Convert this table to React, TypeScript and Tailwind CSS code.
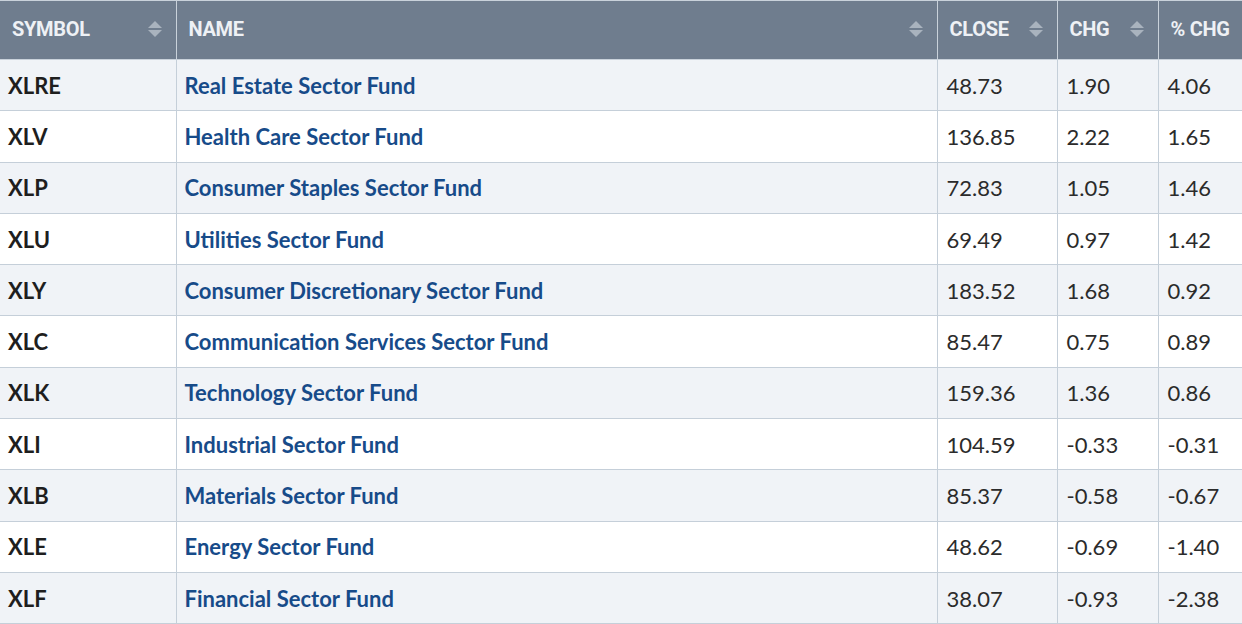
import React from "react";

const rows: [string, string, string, string, string][] = [
  ["XLRE", "Real Estate Sector Fund", "48.73", "1.90", "4.06"],
  ["XLV", "Health Care Sector Fund", "136.85", "2.22", "1.65"],
  ["XLP", "Consumer Staples Sector Fund", "72.83", "1.05", "1.46"],
  ["XLU", "Utilities Sector Fund", "69.49", "0.97", "1.42"],
  ["XLY", "Consumer Discretionary Sector Fund", "183.52", "1.68", "0.92"],
  ["XLC", "Communication Services Sector Fund", "85.47", "0.75", "0.89"],
  ["XLK", "Technology Sector Fund", "159.36", "1.36", "0.86"],
  ["XLI", "Industrial Sector Fund", "104.59", "-0.33", "-0.31"],
  ["XLB", "Materials Sector Fund", "85.37", "-0.58", "-0.67"],
  ["XLE", "Energy Sector Fund", "48.62", "-0.69", "-1.40"],
  ["XLF", "Financial Sector Fund", "38.07", "-0.93", "-2.38"],
];

function SortIcon() {
  return (
    <svg width="14" height="16" viewBox="0 0 14 16" className="shrink-0">
      <path d="M7 0 L14 7 H0 Z" fill="#a9b3be" />
      <path d="M0 9 H14 L7 16 Z" fill="#a9b3be" />
    </svg>
  );
}

function Th({ label, w, sort = true, last = false }: { label: string; w: string; sort?: boolean; last?: boolean }) {
  return (
    <th
      className={`${w} h-[59px] p-0 text-left align-middle font-bold ${last ? "" : "border-r border-r-[#c9d2db]"}`}
    >
      <div className="flex items-center justify-between whitespace-nowrap pl-[12px] pr-[14px] pb-[2px]">
        <span className="text-[20px] text-[#eef1f5] tracking-[-0.3px] font-['Roboto',sans-serif]">{label}</span>
        {sort && <SortIcon />}
      </div>
    </th>
  );
}

export default function App() {
  return (
    <div className="w-[1242px] h-[624px] overflow-hidden bg-white font-['Lato',sans-serif]">
      <table className="w-[1242px] border-collapse table-fixed">
        <thead>
          <tr className="bg-[#6f7d8e] border-t border-t-[#c9d2db] border-b border-b-[#c9d2db]">
            <Th label="SYMBOL" w="w-[176px]" />
            <Th label="NAME" w="w-[761px]" />
            <Th label="CLOSE" w="w-[120px]" />
            <Th label="CHG" w="w-[101px]" />
            <Th label="% CHG" w="w-[84px]" sort={false} last />
          </tr>
        </thead>
        <tbody>
          {rows.map((r, i) => (
            <tr
              key={r[0]}
              className={`h-[51.3px] border-b border-b-[#c5cfd9] ${i % 2 === 0 ? "bg-[#f0f3f7]" : "bg-white"}`}
            >
              <td className="px-[8px] py-0 border-r border-r-[#c5cfd9] text-[22px] font-bold text-[#1e1e1e]">{r[0]}</td>
              <td className="px-[8px] py-0 border-r border-r-[#c5cfd9] text-[22px] font-bold text-[#174b89]">{r[1]}</td>
              <td className="px-[9px] py-0 border-r border-r-[#c5cfd9] text-[22px] text-[#2b2b2b]">{r[2]}</td>
              <td className="px-[9px] py-0 border-r border-r-[#c5cfd9] text-[22px] text-[#2b2b2b]">{r[3]}</td>
              <td className="px-[9px] py-0 text-[22px] text-[#2b2b2b] whitespace-nowrap">{r[4]}</td>
            </tr>
          ))}
        </tbody>
      </table>
    </div>
  );
}
